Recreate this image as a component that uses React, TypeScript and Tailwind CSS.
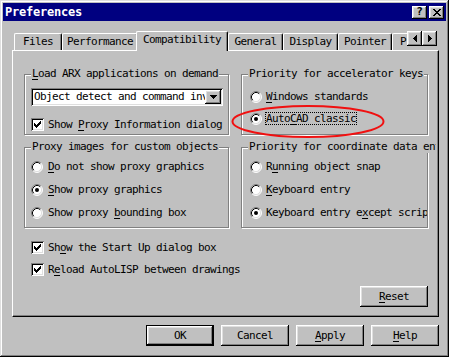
import React from 'react';

// Win98-style bevels
const RAISED = 'shadow-[inset_-1px_-1px_0_#000,inset_1px_1px_0_#fff,inset_-2px_-2px_0_#808080,inset_2px_2px_0_#dfdfdf]';
const SUNKEN = 'shadow-[inset_1px_1px_0_#808080,inset_-1px_-1px_0_#fff,inset_2px_2px_0_#000,inset_-2px_-2px_0_#dfdfdf]';

const CHECK = ['......X', '.....XX', 'X...XXX', 'XX.XXX.', 'XXXXX..', '.XXX...', '..X....'];
const CLOSE = ['XX....XX', '.XX..XX.', '..XXXX..', '...XX...', '..XXXX..', '.XX..XX.', 'XX....XX'];
const LEFT = ['...X', '..XX', '.XXX', 'XXXX', '.XXX', '..XX', '...X'];
const RIGHT = ['X...', 'XX..', 'XXX.', 'XXXX', 'XXX.', 'XX..', 'X...'];
const DOWN = ['XXXXXXX', '.XXXXX.', '..XXX..', '...X...'];

function Glyph({ rows }: { rows: string[] }) {
  let d = '';
  rows.forEach((r, y) => [...r].forEach((c, x) => { if (c === 'X') d += `M${x} ${y}h1v1h-1z`; }));
  const w = rows[0].length;
  const h = rows.length;
  return (
    <svg width={w} height={h} viewBox={`0 0 ${w} ${h}`} shapeRendering="crispEdges" className="flex-none">
      <path d={d} fill="#000" />
    </svg>
  );
}

function Radio({ checked }: { checked?: boolean }) {
  return (
    <svg width="12" height="12" viewBox="0 0 12 12" className="flex-none">
      <circle cx="6" cy="6" r="5" fill="#fff" />
      <path d="M9.89 2.11A5.5 5.5 0 0 0 2.11 9.89" fill="none" stroke="#808080" />
      <path d="M2.11 9.89A5.5 5.5 0 0 0 9.89 2.11" fill="none" stroke="#fff" />
      <path d="M9.18 2.82A4.5 4.5 0 0 0 2.82 9.18" fill="none" stroke="#000" />
      <path d="M2.82 9.18A4.5 4.5 0 0 0 9.18 2.82" fill="none" stroke="#dfdfdf" />
      {checked && <circle cx="6" cy="6" r="2" fill="#000" />}
    </svg>
  );
}

function CheckBox() {
  return (
    <span className={`w-[13px] h-[13px] flex-none bg-white flex items-center justify-center ${SUNKEN}`}>
      <Glyph rows={CHECK} />
    </span>
  );
}

function RadioRow({ checked, focused, gap, children }: { checked?: boolean; focused?: boolean; gap: string; children: React.ReactNode }) {
  return (
    <div className={`flex items-center h-[13px] min-w-0 ${gap}`}>
      <Radio checked={checked} />
      <span className={`h-[13px] flex items-center border whitespace-nowrap ${focused ? 'border-dotted border-black' : 'border-transparent'}`}>
        <span>{children}</span>
      </span>
    </div>
  );
}

function CheckRow({ className = '', children }: { className?: string; children: React.ReactNode }) {
  return (
    <div className={`flex items-center gap-[4px] h-[13px] ${className}`}>
      <CheckBox />
      <span className="whitespace-nowrap">{children}</span>
    </div>
  );
}

// Etched group box; title sits on the top line
function Group({ title, className, titleClass = '', pad, children }: { title: React.ReactNode; className: string; titleClass?: string; pad: string; children: React.ReactNode }) {
  return (
    <div className={`border border-[#808080] shadow-[inset_1px_1px_0_#fff,1px_1px_0_#fff] flex flex-col ${className}`}>
      <div className="-mt-[7px] ml-[6px] flex">
        <span className={`bg-[#c0c0c0] px-[1px] whitespace-nowrap overflow-hidden flex-none ${titleClass}`}>{title}</span>
      </div>
      <div className={`flex flex-col min-w-0 overflow-hidden ${pad}`}>{children}</div>
    </div>
  );
}

const TABS = [
  { label: 'Files', w: 'w-[48px]' },
  { label: 'Performance', w: 'w-[76px]' },
  { label: 'Compatibility', w: 'w-[92px]', active: true },
  { label: 'General', w: 'w-[55px]' },
  { label: 'Display', w: 'w-[55px]' },
  { label: 'Pointer', w: 'w-[54px]' },
  { label: 'Profiles', w: 'w-[64px]' },
];

function Button({ children, isDefault }: { children: React.ReactNode; isDefault?: boolean }) {
  return (
    <button
      type="button"
      className={`w-[68px] h-[21px] bg-[#c0c0c0] flex items-center justify-center ${RAISED} ${isDefault ? 'border border-black' : ''}`}
    >
      {children}
    </button>
  );
}

export default function App() {
  return (
    <div className="relative w-[449px] h-[357px] bg-[#c0c0c0] p-[3px] flex flex-col text-black text-[11px] leading-[12px] tracking-[-0.62px] font-['DejaVu_Sans_Mono',monospace] shadow-[inset_-1px_-1px_0_#000,inset_1px_1px_0_#dfdfdf,inset_-2px_-2px_0_#808080,inset_2px_2px_0_#fff]">
      {/* Title bar */}
      <div className="h-[18px] bg-[#000080] flex items-center pl-[2px] pr-[2px] flex-none">
        <span className="flex-1 text-white font-bold text-[12px] tracking-[-0.22px]">Preferences</span>
        <div className="flex gap-[2px]">
          <span className={`w-[15px] h-[13px] bg-[#c0c0c0] flex items-center justify-center font-bold text-[11px] tracking-normal ${RAISED}`}>?</span>
          <span className={`w-[15px] h-[13px] bg-[#c0c0c0] flex items-center justify-center pl-[1px] ${RAISED}`}>
            <Glyph rows={CLOSE} />
          </span>
        </div>
      </div>

      {/* Tabs + page */}
      <div className="flex flex-col pl-[9px] pr-[7px] pt-[10px]">
        <div className="relative z-10 flex h-[20px] ml-[2px]">
          <div className="w-[393px] overflow-hidden flex items-end">
            {TABS.map((t) =>
              t.active ? (
                <div
                  key={t.label}
                  className={`${t.w} h-[20px] -ml-[2px] flex-none bg-[#c0c0c0] border-l border-t border-r border-l-white border-t-white border-r-black rounded-t-[2px] shadow-[inset_-1px_0_0_#808080] flex justify-center pt-[2px] whitespace-nowrap`}
                >
                  {t.label}
                </div>
              ) : (
                <div
                  key={t.label}
                  className={`${t.w} h-[17px] mb-[1px] flex-none border-l border-t border-r border-l-white border-t-white border-r-black rounded-t-[2px] shadow-[inset_-1px_0_0_#808080] flex items-center justify-center whitespace-nowrap`}
                >
                  {t.label}
                </div>
              )
            )}
          </div>
          <div className="flex self-start">
            <span className={`w-[15px] h-[15px] bg-[#c0c0c0] flex items-center justify-center ${RAISED}`}>
              <Glyph rows={LEFT} />
            </span>
            <span className={`w-[15px] h-[15px] bg-[#c0c0c0] flex items-center justify-center ${RAISED}`}>
              <Glyph rows={RIGHT} />
            </span>
          </div>
        </div>

        <div className="-mt-px w-[427px] h-[267px] border border-t-white border-l-white border-r-black border-b-black shadow-[inset_-1px_-1px_0_#808080] flex flex-col pl-[11px] pr-[10px]">
          {/* Row 1 */}
          <div className="flex gap-[12px] mt-[23px]">
            <Group
              title={<><u className="underline-offset-2">L</u>oad ARX applications on demand</>}
              className="w-[205px] h-[61px]"
              pad="pl-[6px] pr-[5px]"
            >
              <div className={`mt-[8px] h-[18px] bg-white flex p-[2px] ${SUNKEN}`}>
                <span className="flex-1 min-w-0 overflow-hidden whitespace-nowrap pl-[1px] leading-[14px]">
                  Object detect and command invoke
                </span>
                <span className={`w-[16px] h-[14px] flex-none bg-[#c0c0c0] flex items-center justify-center ${RAISED}`}>
                  <Glyph rows={DOWN} />
                </span>
              </div>
              <CheckRow className="mt-[12px]">
                Show <u className="underline-offset-2">P</u>roxy Information dialog
              </CheckRow>
            </Group>

            <Group title="Priority for accelerator keys" className="w-[187px] h-[61px]" pad="pl-[8px]">
              <div className="flex flex-col gap-[9px] mt-[10px]">
                <RadioRow gap="gap-[3px]">
                  <u className="underline-offset-2">W</u>indows standards
                </RadioRow>
                <RadioRow gap="gap-[3px]" checked focused>
                  Auto<u className="underline-offset-2">C</u>AD classic
                </RadioRow>
              </div>
            </Group>
          </div>

          {/* Row 2 */}
          <div className="flex gap-[12px] mt-[12px]">
            <Group title="Proxy images for custom objects" className="w-[205px] h-[81px]" pad="pl-[6px]">
              <div className="flex flex-col gap-[10px] mt-[7px]">
                <RadioRow gap="gap-[4px]">
                  <u className="underline-offset-2">D</u>o not show proxy graphics
                </RadioRow>
                <RadioRow gap="gap-[4px]" checked>
                  <u className="underline-offset-2">S</u>how proxy graphics
                </RadioRow>
                <RadioRow gap="gap-[4px]">
                  Show proxy <u className="underline-offset-2">b</u>ounding box
                </RadioRow>
              </div>
            </Group>

            <Group title="Priority for coordinate data entry" titleClass="max-w-[188px]" className="w-[187px] h-[81px]" pad="pl-[8px]">
              <div className="flex flex-col gap-[10px] mt-[7px]">
                <RadioRow gap="gap-[3px]">
                  R<u className="underline-offset-2">u</u>nning object snap
                </RadioRow>
                <RadioRow gap="gap-[3px]">
                  <u className="underline-offset-2">K</u>eyboard entry
                </RadioRow>
                <RadioRow gap="gap-[3px]" checked>
                  Keyboard entry e<u className="underline-offset-2">x</u>cept scripts
                </RadioRow>
              </div>
            </Group>
          </div>

          <div className="flex flex-col gap-[9px] mt-[13px] ml-[7px]">
            <CheckRow>
              Sh<u className="underline-offset-2">o</u>w the Start Up dialog box
            </CheckRow>
            <CheckRow>
              R<u className="underline-offset-2">e</u>load AutoLISP between drawings
            </CheckRow>
          </div>

          <div className="flex justify-end mt-[10px]">
            <Button>
              <span><u className="underline-offset-2">R</u>eset</span>
            </Button>
          </div>
        </div>
      </div>

      {/* Dialog buttons */}
      <div className="flex justify-end gap-[7px] mt-[8px] pr-[7px]">
        <Button isDefault>OK</Button>
        <Button>Cancel</Button>
        <Button>
          <span><u className="underline-offset-2">A</u>pply</span>
        </Button>
        <Button>
          <span><u className="underline-offset-2">H</u>elp</span>
        </Button>
      </div>

      {/* Red annotation ellipse */}
      <svg className="absolute left-[231px] top-[104px]" width="156" height="36" viewBox="0 0 156 36">
        <ellipse cx="77" cy="17.5" rx="75.5" ry="15.5" fill="none" stroke="#f01010" strokeWidth="2" />
      </svg>
    </div>
  );
}
